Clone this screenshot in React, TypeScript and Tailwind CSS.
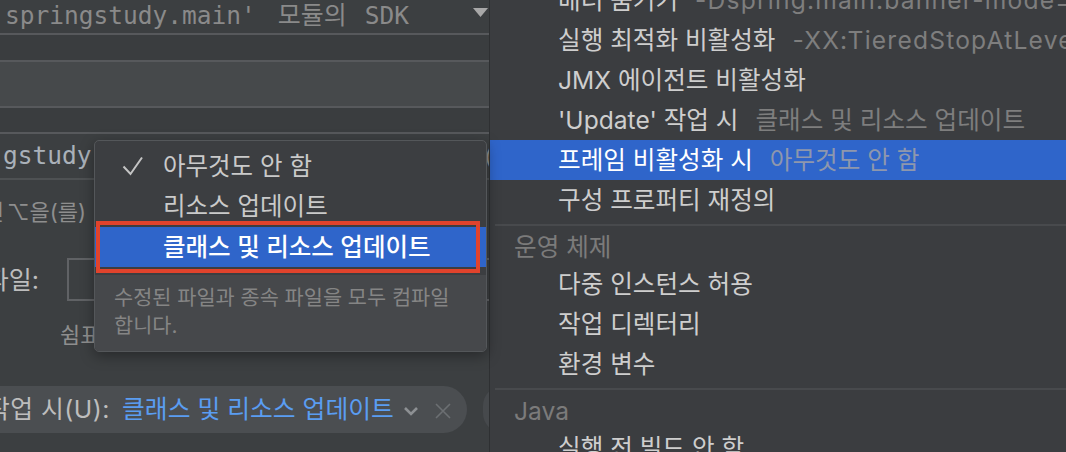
import React from "react";

const SANS = "font-['Inter','Noto_Sans_CJK_KR','DejaVu_Sans',sans-serif]";
const MONO = "font-['DejaVu_Sans_Mono','Noto_Sans_CJK_KR',monospace]";

function Item({
  label,
  hint,
  active,
  latin,
}: {
  label: string;
  hint?: string;
  active?: boolean;
  latin?: boolean;
}) {
  return (
    <div
      className={
        "h-[40px] shrink-0 flex items-center pl-[68px] whitespace-nowrap text-[24.6px] " +
        (active ? "bg-[#2f65ca] text-white" : "text-[#cecece]")
      }
    >
      <span>{label}</span>
      {hint && (
        <span
          className={
            "ml-[17px] " +
            (latin ? "tracking-[1.2px] " : "") +
            (active ? "text-[#8e97ad]" : "text-[#7e7e7e]")
          }
        >
          {hint}
        </span>
      )}
    </div>
  );
}

function Sep() {
  return (
    <div className="h-[10px] shrink-0 flex items-center pl-[5px]">
      <div className="h-[2px] w-full bg-[#484a4d]" />
    </div>
  );
}

function Header({ label }: { label: string }) {
  return (
    <div className="h-[34px] shrink-0 flex items-center pl-[24px] text-[24.6px] text-[#7b7b7b] whitespace-nowrap">
      {label}
    </div>
  );
}

export default function App() {
  return (
    <div className={"relative w-[1066px] h-[452px] overflow-hidden flex bg-[#3c3f41] " + SANS}>
      {/* Left panel */}
      <div className="w-[489px] shrink-0 h-full overflow-hidden flex flex-col bg-[#3c3f41]">
        <div className="h-[33px] shrink-0 flex items-center justify-between pl-[5px] pr-[1px] pb-[4px]">
          <span className={"flex items-baseline text-[24.5px] text-[#8a8a8a] whitespace-nowrap leading-none " + MONO}>
            <span>springstudy.main'</span>
            <span className="ml-[22px] mr-[18px] font-['Noto_Sans_CJK_KR',sans-serif] text-[25px]">모듈의</span>
            <span>SDK</span>
          </span>
          <svg width="15" height="9" viewBox="0 0 15 9" className="mt-[-4px]">
            <polygon points="0,0 15,0 7.5,9" fill="#a8a8a8" />
          </svg>
        </div>
        <div className="h-[2px] shrink-0 bg-[#57595c]" />
        <div className="h-[25px] shrink-0 bg-[#3a3d3f]" />
        <div className="h-[2px] shrink-0 bg-[#57595c]" />
        <div className="h-[44px] shrink-0 bg-[#46494b]" />
        <div className="h-[2px] shrink-0 bg-[#57595c]" />
        <div className="h-[24px] shrink-0 bg-[#3a3d3f]" />
        <div className="h-[2px] shrink-0 bg-[#57595c]" />
        <div className="h-[44px] shrink-0 flex items-center justify-between">
          <span className={"text-[24.5px] text-[#aab1b9] ml-[3px] whitespace-nowrap " + MONO}>gstudy</span>
          <span className={"text-[22px] text-[#8c8c8c] mr-[-6px] " + MONO}>(</span>
        </div>
        <div className="h-[2px] shrink-0 bg-[#4e5153]" />
        <div className="h-[64px] shrink-0 flex items-center">
          <div className="w-[86px] shrink-0 flex justify-end">
            <span className="text-[22px] text-[#8e8e8e] whitespace-nowrap">
              <span className="mr-[3px]">하려면</span>⌥을(를)
            </span>
          </div>
        </div>
        <div className="mt-[14px] h-[43px] shrink-0 flex">
          <div className="w-[67px] shrink-0 flex justify-end pr-[28px] pt-[4px]">
            <span className="text-[25px] text-[#bdbdbd] whitespace-nowrap">파일:</span>
          </div>
          <div className="flex-1 border-[2px] border-r-0 border-[#606265]" />
        </div>
        <div className="mt-[20px] h-[28px] shrink-0 flex items-center">
          <span className="ml-[60px] text-[22px] text-[#8e8e8e] whitespace-nowrap">쉼표</span>
        </div>
        <div className="mt-[37px] h-[47px] shrink-0 flex items-center">
          <div className="ml-[-40px] w-[507px] shrink-0 h-[47px] rounded-full bg-[#4b4e51] flex items-center whitespace-nowrap">
            <div className="w-[150px] shrink-0 flex justify-end">
              <span className="text-[24.8px] tracking-[0.5px] text-[#bdbdbd]">작업 시(U):</span>
            </div>
            <span className="ml-[12px] text-[24.8px] text-[#5a9df2]">클래스 및 리소스 업데이트</span>
            <svg width="16" height="10" viewBox="0 0 16 10" className="ml-[9px] mt-[2px]">
              <path d="M2 2 L8 8 L14 2" fill="none" stroke="#8d9093" strokeWidth="2.6" />
            </svg>
            <svg width="16" height="16" viewBox="0 0 16 16" className="ml-[16px] mt-[2px]">
              <path d="M1 1 L15 15 M15 1 L1 15" fill="none" stroke="#6c6f72" strokeWidth="1.6" />
            </svg>
          </div>
          <div className="ml-[16px] w-[40px] shrink-0 h-[47px] rounded-full bg-[#46494c]" />
        </div>
      </div>

      <div className="w-px shrink-0 bg-[#2e3032]" />

      {/* Right panel */}
      <div className="flex-1 h-full overflow-hidden flex flex-col bg-[#3b3d40]">
        <div className="mt-[-20px]" />
        <Item label="배너 숨기기" hint="-Dspring.main.banner-mode=off" latin />
        <Item label="실행 최적화 비활성화" hint="-XX:TieredStopAtLevel=1" latin />
        <Item label="JMX 에이전트 비활성화" />
        <Item label="'Update' 작업 시" hint="클래스 및 리소스 업데이트" />
        <Item label="프레임 비활성화 시" hint="아무것도 안 함" active />
        <Item label="구성 프로퍼티 재정의" />
        <Sep />
        <Header label="운영 체제" />
        <Item label="다중 인스턴스 허용" />
        <Item label="작업 디렉터리" />
        <Item label="환경 변수" />
        <Sep />
        <Header label="Java" />
        <Item label="실행 전 빌드 안 함" />
      </div>

      {/* Popup menu */}
      <div className="absolute left-[94px] top-[140px] w-[393px] h-[212px] bg-[#3c3e41] border border-[#54575a] rounded-[5px] shadow-[0_4px_14px_rgba(0,0,0,0.35)] flex flex-col overflow-hidden">
        <div className="pt-[5px] flex flex-col text-[24.5px] whitespace-nowrap">
          <div className="h-[40px] flex items-center text-[#cacaca]">
            <span className="w-[68px] flex justify-end pr-[19px]">
              <svg width="22" height="20" viewBox="0 0 22 20">
                <path d="M1.5 10.5 L8.5 18 L20 1.5" fill="none" stroke="#c4c4c4" strokeWidth="2" />
              </svg>
            </span>
            <span>아무것도 안 함</span>
          </div>
          <div className="h-[40px] flex items-center pl-[68px] text-[#cacaca]">리소스 업데이트</div>
          <div className="h-[40px] mt-[1px] flex items-center pl-[68px] bg-[#2f65ca] text-white font-medium">
            클래스 및 리소스 업데이트
          </div>
        </div>
        <div className="mt-[8px] flex-1 bg-[#46484b] pl-[19px] pt-[9px] text-[20.8px] leading-[28px] text-[#858585]">
          수정된 파일과 종속 파일을 모두 컴파일
          <br />
          합니다.
        </div>
      </div>

      {/* Red annotation box */}
      <div className="absolute left-[96px] top-[221px] w-[384px] h-[52px] border-[4px] border-[#e1432c]" />
    </div>
  );
}
